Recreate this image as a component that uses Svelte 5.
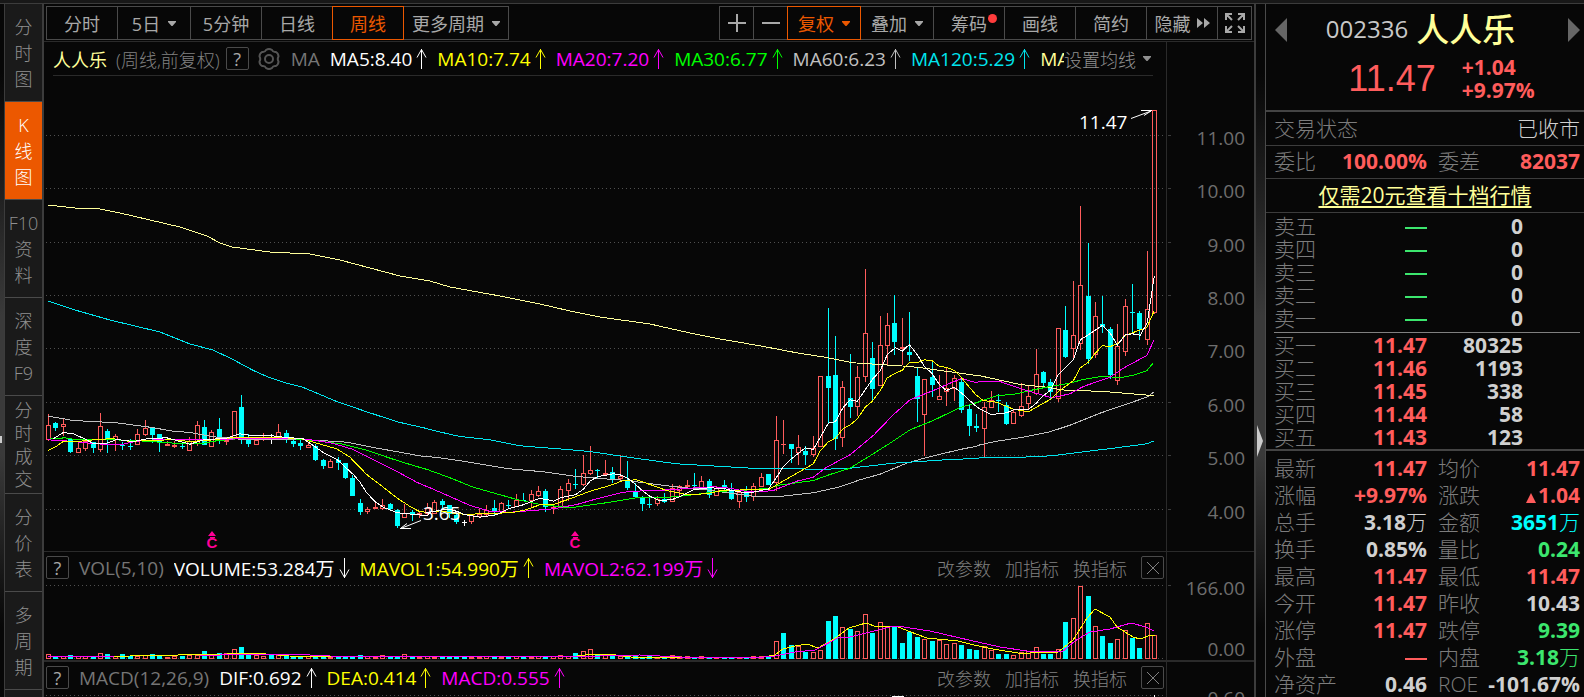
<script lang="ts">
  type Candle = { x: number; kind: string; top: number; bottom: number; high: number; low: number };

  const STEP = 7.425;
  const FIRST_X = 48;

  const sideTabs = [
    ["分", "时", "图"],
    ["K", "线", "图"],
    ["F10", "资", "料"],
    ["深", "度", "F9"],
    ["分", "时", "成", "交"],
    ["分", "价", "表"],
    ["多", "周", "期"],
  ];

  const periods = [
    { label: "分时" },
    { label: "5日", caret: true },
    { label: "5分钟" },
    { label: "日线" },
    { label: "周线", active: true },
    { label: "更多周期", caret: true, wide: true },
  ];

  const maLegend = [
    { text: "MA5:8.40", color: "#ffffff" },
    { text: "MA10:7.74", color: "#ffff00" },
    { text: "MA20:7.20", color: "#ff00ff" },
    { text: "MA30:6.77", color: "#00ff00" },
    { text: "MA60:6.23", color: "#c0c0c0" },
    { text: "MA120:5.29", color: "#00e5ee" },
    { text: "MA250:6.21", color: "#ffff99" },
  ];

  const volLegend = [
    { text: "VOLUME:53.284万", color: "#ffffff", down: true },
    { text: "MAVOL1:54.990万", color: "#ffff00" },
    { text: "MAVOL2:62.199万", color: "#ff00ff", down: true },
  ];

  const macdLegend = [
    { text: "DIF:0.692", color: "#ffffff" },
    { text: "DEA:0.414", color: "#ffff00" },
    { text: "MACD:0.555", color: "#ff00ff" },
  ];

  const gridY = [135, 188, 242, 295, 348, 402, 455, 509];
  const priceLabels = gridY.map((y, i) => ({ y: y - 76, text: (11 - i).toFixed(2) }));

  // blocks of candles: offset, then "kind top bottom high low" in thirds of a pixel
  const candleBlocks: [number, string][] = [
    [370, `r 165 209 132 213,c 159 174 156 183,r 162 171 144 198,c 207 246 207 249,r 234 248 216 248,r 212 236 209 243,
      c 216 234 216 249,r 168 240 129 246,c 183 209 177 249,r 198 210 192 243,c 225 228 215 240,c 228 231 208 240,
      r 192 224 177 224,r 174 195 150 198,c 174 195 171 219,c 192 216 192 246,r 222 227 213 227,r 225 230 213 235,
      c 228 231 217 237,r 213 242 201 242,r 165 222 153 227,c 171 225 150 225,r 186 230 180 230,c 177 210 144 222,
      r 210 215 205 225,r 123 207 123 207,c 111 210 75 222,c 207 222 192 231,r 210 224 210 224,r 202 210 189 213,
      w 207 210 192 222,r 186 200 162 204,c 189 204 180 219,c 213 222 207 231,c 219 228 210 240,r 225 234 220 234,
      c 228 270 222 273,c 270 288 266 297,r 273 293 267 293,c 270 279 261 300,c 279 324 279 327,c 324 378 315 378,
      c 399 426 387 435,r 417 426 410 432,r 411 417 399 417,r 405 417 387 420,c 402 417 399 423,c 420 468 417 474,
      r 429 443 402 443,c 426 432 420 453,r 429 434 423 444,r 414 432 399 435,r 396 431 390 432,c 393 405 387 417,
      c 405 432 405 444,c 435 456 432 462,w 456 459 450 468,r 436 456 432 462,r 432 440 417 444,r 420 435 405 440,
      c 414 423 390 438,r 399 425 396 432,c 405 408 390 414,r 390 412 372 412,c 389 392 369 393,r 372 392 360 412,
      r 363 378 348 381,c 363 411 357 426,r 411 417 405 432,r 357 411 348 414,r 339 362 327 393,c 342 345 297 357,
      r 309 345 255 348,r 300 312 228 315,c 299 302 297 327,r 309 314 270 314,c 306 330 291 340,r 318 327 255 333,
      c 330 354 273 360,c 363 381 339 384,c 381 402 378 423,c 402 405 378 414,r 387 402 378 408,c 387 395 369 400,
      r 354 395 342 395,r 348 362 345 378,r 345 350 330 350,c 344 347 309 359,r 333 353 318 358,c 333 374 327 384,
      r 353 377 348 378,c 345 351 330 366,c 360 387 339 390,r 366 396 360 414,c 363 381 348 396,r 348 380 339 393,
      r 321 350 309 352,c 312 345 312 345,r 210 339 138 363,r 222 225 150 252,c 222 237 222 279`],
    [240, `r 622 638 585 675,c 633 645 618 675,r 625 644 588 650,r 409 622 409 622,c 408 444 204 552,c 405 597 288 630,
      r 441 593 423 621,c 474 501 342 534,r 412 500 378 528,r 279 412 87 426,c 354 447 306 486,r 316 437 228 437,
      r 256 317 219 378,c 249 306 165 345,r 321 327 234 375,c 336 345 216 363,c 408 477 381 546,r 418 524 418 648,
      c 411 435 366 471,r 468 479 405 480,r 445 457 381 497,r 414 448 405 483,c 426 510 414 519,c 507 558 492 588,
      c 558 564 522 576,r 502 566 486 651,r 480 503 453 503,c 480 483 462 516,c 495 552 486 555,r 516 551 510 551`],
    [90, `r 948 977 880 980,r 919 941 888 956,r 853 911 777 915,c 846 879 843 888,c 876 906 867 927,r 714 926 714 936,
      c 720 801 648 804,r 735 776 573 806,r 586 761 348 780,c 618 807 459 822,r 679 794 636 804,c 702 711 618 729,
      c 717 855 711 867,r 769 872 702 885,r 649 785 627 798,c 666 669 582 726,c 669 717 663 750,r 657 749 483 765,
      r 61 668 61 671`],
  ];

  const candles: Candle[] = candleBlocks
    .flatMap(([base, rows]) =>
      rows.split(",").map((row) => {
        const [kind, ...n] = row.trim().split(" ");
        const [top, bottom, high, low] = n.map((v) => Math.round(base + Number(v) / 3));
        return { kind, top, bottom: Math.max(bottom, top + 1), high, low };
      })
    )
    .map((c, i) => ({ ...c, x: Math.round(FIRST_X + i * STEP) }));

  const colors: Record<string, string> = { r: "#ff5c5c", c: "#00ffff", w: "#ffffff" };

  function join(...tiles: [number, number, string][]) {
    return tiles
      .flatMap(([ox, oy, pts]) =>
        pts.split(" ").map((p) => {
          const [x, y] = p.split(",").map(Number);
          return `${(ox + x / 3).toFixed(1)},${(oy + y / 3 + 0.5).toFixed(1)}`;
        })
      )
      .join(" ");
  }

  const maLines = [
    {
      color: "#c0c0c0",
      points: join(
        [40, 370, "25,137 100,150 230,157 330,170 400,182 450,186 520,199 600,206 790,207 920,215 1000,231 1090,247 1150,258"],
        [430, 370, "0,259 30,262 100,272 230,294 340,304 440,318 500,323 590,330 720,347 830,358 930,372 985,379"],
        [760, 240, "0,769 60,768 160,757 240,739 300,718 360,701 440,668 500,651 600,627 650,617"],
        [980, 90, "0,1063 50,1052 130,1040 210,1024 270,1004 360,968 460,934 500,920 523,904"]
      ),
    },
    {
      color: "#00e5ee",
      points:
        "48,301 75,310 110,320 160,332 190,344 213,350 232,359 " +
        join(
          [40, 370, "640,0 690,22 740,38 785,49 890,93 980,124 1072,154 1160,174"],
          [430, 370, "10,180 90,198 180,208 270,226 400,236 480,243 600,261 740,280 980,294"],
          [760, 240, "0,685 130,685 160,688 270,683 400,668 570,657 650,654"],
          [980, 90, "0,1102 90,1102 215,1096 300,1085 400,1073 500,1060 523,1051"]
        ),
    },
    {
      color: "#ffff99",
      points:
        "48,205 75,208 100,209 120,213 150,220 180,227 207,236 220,243 232,247 270,252 310,254 340,260 400,276 430,281 450,287 500,296 540,304 570,311 600,317 650,324 690,333 720,339 " +
        join(
          [760, 240, "0,316 110,337 200,351 280,367 450,378 500,384 600,398 650,405"],
          [980, 90, "0,856 120,882 190,889 260,900 360,902 480,912 523,916"]
        ),
    },
    {
      color: "#00ff00",
      points: join(
        [40, 370, "25,206 75,202 100,206 200,207 320,212 370,216 440,220 490,218 530,211 600,204 760,205 840,212 910,221 980,239 1050,263 1120,285 1165,298"],
        [430, 370, "0,300 60,322 130,350 200,370 260,387 330,402 420,412 520,398 620,382 700,382 780,374 860,363 940,359 980,357"],
        [760, 240, "0,745 30,744 50,735 160,720 210,702 270,683 330,646 390,608 450,568 520,540 600,501 655,485"],
        [980, 90, "0,932 50,916 110,910 150,900 210,888 260,880 310,867 370,857 420,862 460,854 500,841 520,817"]
      ),
    },
    {
      color: "#ff00ff",
      points: join(
        [40, 370, "25,208 90,212 150,218 200,222 240,223 290,212 360,207 450,208 560,207 600,204 780,205 830,210 880,219 940,237 1000,268 1060,297 1130,335 1165,350"],
        [430, 370, "0,352 60,378 120,405 180,422 240,425 310,420 370,415 440,402 500,385 580,365 640,361 720,358 780,353 850,349 900,353 950,363"],
        [760, 240, "0,754 40,750 110,722 160,710 200,680 270,643 340,585 400,523 450,478 520,450 570,428 605,414 650,427"],
        [980, 90, "0,872 60,873 130,897 215,922 270,910 310,888 390,860 430,833 500,795 523,747"]
      ),
    },
    {
      color: "#ffff00",
      points: join(
        [40, 370, "25,240 45,230 70,213 120,212 180,206 220,205 270,213 310,210 400,208 450,213 520,208 590,200 680,200 780,204 820,215 890,235 930,260 980,312 1030,350 1070,382 1110,408 1140,424 1165,425"],
        [430, 370, "0,425 30,421 70,428 110,432 160,429 240,427 280,420 330,403 370,402 420,385 480,362 540,345 580,330 620,328 660,342 710,360 770,372 830,370 880,359 985,358"],
        [760, 240, "0,748 25,748 50,733 100,704 160,670 180,632 205,604 226,593 250,564 271,553 292,535 316,500 337,482 361,450 382,412 406,398 427,389 448,366 472,367 493,358 517,361 538,378 559,380 583,390 604,411 628,440 649,464"],
        [980, 90, "10,930 50,935 100,956 145,964 190,938 211,927 235,903 280,871 301,832 325,815 346,788 367,766 391,768 412,760 436,734 457,727 481,718 500,712 523,660"]
      ),
    },
    {
      color: "#ffffff",
      points: join(
        [40, 370, "40,205 70,186 100,190 130,203 160,219 200,218 230,207 280,213 320,205 380,202 420,213 450,221 490,208 560,203 600,190 640,196 690,195 720,199 790,205 820,225 850,246 890,266 916,290 940,312 960,335 980,367 1006,394 1030,410 1072,427 1117,431 1162,436"],
        [430, 370, "0,425 37,418 60,417 82,423 103,432 150,440 200,433 235,415 280,403 325,385 350,386 370,392 391,382 436,373 460,356 481,331 505,318 550,310 575,314 600,328 620,345 637,360 661,378 690,391 727,387 748,379 793,357 838,352 883,354 904,360 949,367 985,363"],
        [760, 240, "0,750 25,746 49,712 70,678 92,657 136,622 160,627 205,548 226,544 250,500 271,478 292,482 337,417 361,390 382,342 406,322 427,332 448,312 472,343 493,377 517,400 538,432 559,450 583,440 604,457 649,498"],
        [980, 90, "0,956 34,972 80,967 100,958 145,957 169,938 190,915 211,900 235,853 280,808 301,748 325,733 367,705 391,728 412,764 436,733 457,730 481,734 502,696 523,556"]
      ),
    },
  ];

  // bar heights in pixels above the zero line
  const volumes = [
    5, 2, 3, 4, 3, 3, 3, 6, 5, 3, 5, 3, 3, 4, 5, 3, 2, 3, 3, 4, 4, 8, 5, 6, 6, 10, 12, 6, 4, 3, 4, 4, 3, 3, 3, 3, 3, 2, 2, 2,
    2, 3, 4, 3, 2, 4, 3, 2, 5, 3, 2, 3, 2, 2, 2, 3, 2, 2, 2, 3, 3, 2, 3, 3, 2, 2, 3, 2, 3, 4, 3, 6, 8, 10, 5, 4, 4, 3, 3, 3,
    2, 3, 2, 3, 4, 3, 3, 2, 3, 2, 2, 2, 2, 2, 2, 3, 3, 3,
    18, 26, 14, 13, 7, 7, 9, 38, 43, 32, 30, 28, 45, 26, 37, 32, 32, 16, 27, 22, 20, 18, 19, 15, 16, 14, 10, 9, 13, 9, 5, 5,
    4, 7, 8, 12, 5, 5, 10, 37, 41, 73, 63, 33, 23, 16, 20, 29, 21, 11, 36, 24,
  ];
  const flipped = new Set([99, 115]);

  const volLines = [
    {
      color: "#ffff00",
      points:
        "48,657 130,656 227,654 242,653 266,654 289,656 351,657 577,656 593,654 616,655 631,657 764,657 775,655 783,649 795,646 807,644 818,648 834,639 849,628 866,623 877,627 896,626 908,631 927,638 958,641 974,645 993,649 1024,654 1037,652 1058,652 1073,640 1087,618 1095,609 1110,617 1117,627 1133,637 1140,639 1151,635 1155,636",
    },
    {
      color: "#ff00ff",
      points:
        "48,657 115,656 200,656 240,654 290,654 330,656 400,657 600,656 640,655 680,657 764,657 775,656 795,652 815,650 838,638 850,637 866,633 890,627 897,626 930,631 960,638 1000,647 1027,651 1055,651 1062,652 1075,641 1090,632 1110,629 1131,623 1146,627 1154,631",
    },
  ];

  const asks = ["五", "四", "三", "二", "一"];
  const bids = [
    ["买一", "11.47", "80325"],
    ["买二", "11.46", "1193"],
    ["买三", "11.45", "338"],
    ["买四", "11.44", "58"],
    ["买五", "11.43", "123"],
  ];

  const stats = [
    [["最新", "11.47", "up"], ["均价", "11.47", "up"]],
    [["涨幅", "+9.97%", "up"], ["涨跌", "1.04", "up tri"]],
    [["总手", "3.18", "flat", "万"], ["金额", "3651", "cyan", "万"]],
    [["换手", "0.85%", "flat"], ["量比", "0.24", "down"]],
    [["最高", "11.47", "up"], ["最低", "11.47", "up"]],
    [["今开", "11.47", "up"], ["昨收", "10.43", "flat"]],
    [["涨停", "11.47", "up"], ["跌停", "9.39", "down"]],
    [["外盘", "", "up dash"], ["内盘", "3.18", "down", "万"]],
    [["净资产", "0.46", "flat"], ["ROE", "-101.67%", "flat"]],
  ];

  let activeTab = $state(1);
</script>

{#snippet caret()}
  <svg class="caret" width="8" height="5" viewBox="0 0 8 5"><path d="M0 0H8V1L4.5 5H3.5L0 1Z" fill="currentColor" /></svg>
{/snippet}

{#snippet legend(items)}
  {#each items as item}
    <span class="legend-item" style="color: {item.color}">
      {item.text}
      <svg width="11" height="22" viewBox="0 0 11 22" fill="none" stroke="currentColor">
        {#if item.down}
          <path d="M5.5 1V21M1 12.5L5.5 20.5L10 12.5" />
        {:else}
          <path d="M5.5 21V1M1 9.5L5.5 1.5L10 9.5" />
        {/if}
      </svg>
    </span>
  {/each}
{/snippet}

{#snippet paneTools()}
  <div class="pane-tools">
    <button>改参数</button>
    <button>加指标</button>
    <button>换指标</button>
    <button class="box" aria-label="关闭">
      <svg width="14" height="14" viewBox="0 0 14 14" stroke="currentColor"><path d="M1 1L13 13M13 1L1 13" /></svg>
    </button>
  </div>
{/snippet}

<div class="app">
  <div class="gutter left">
    <i></i>
  </div>
  <nav class="side">
    {#each sideTabs as chars, i}
      <button class:active={i === activeTab} class:tight={chars.length > 3} onclick={() => (activeTab = i)}>
        {#each chars as ch}<span>{ch}</span>{/each}
      </button>
    {/each}
  </nav>

  <main>
    <div class="toolbar">
      <div class="group">
        {#each periods as p}
          <button class:active={p.active} class:wide={p.wide} class:has-caret={p.caret}>
            {p.label}{#if p.caret}{@render caret()}{/if}
          </button>
        {/each}
      </div>
      <div class="group">
        <button class="icon" aria-label="放大">
          <svg width="18" height="18" viewBox="0 0 18 18"><path d="M0 8H8V0H10V8H18V10H10V18H8V10H0Z" fill="currentColor" /></svg>
        </button>
        <button class="icon" aria-label="缩小">
          <svg width="18" height="18" viewBox="0 0 18 18"><path d="M0 8H18V10H0Z" fill="currentColor" /></svg>
        </button>
        <button class="active has-caret">复权{@render caret()}</button>
        <button class="has-caret">叠加{@render caret()}</button>
        <button class="chips">筹码<i class="dot"></i></button>
        <button>画线</button>
        <button>简约</button>
        <button class="has-caret hide">隐藏
          <svg width="13" height="10" viewBox="0 0 13 10"><path d="M0 0L6 5L0 10ZM7 0L13 5L7 10Z" fill="currentColor" /></svg>
        </button>
        <button class="icon" aria-label="全屏">
          <svg width="22" height="22" viewBox="0 0 22 22" fill="none" stroke="currentColor" stroke-width="2">
            <path d="M2 8V2H8M14 2H20V8M20 14V20H14M8 20H2V14M2 2L8 8M20 2L14 8M20 20L14 14M2 20L8 14" />
          </svg>
        </button>
      </div>
    </div>

    <section class="pane price">
      <div class="plot">
        <header>
          <span class="name">人人乐</span>
          <span class="mode">(周线,前复权)</span>
          <button class="box">?</button>
          <button class="gear" aria-label="设置">
            <svg width="24" height="24" viewBox="0 0 24 24" fill="none" stroke="#555" stroke-width="2">
              <path d="M9 3Q12 1 15 3Q16 5.500 19 5Q21.500 6.500 21.500 9.500Q20 12 21.500 14.500Q21.500 17.500 19 19Q16 18.500 15 21Q12 23 9 21Q8 18.500 5 19Q2.500 17.500 2.500 14.500Q4 12 2.500 9.500Q2.500 6.500 5 5Q8 5.500 9 3Z" />
              <circle cx="12" cy="12" r="4" />
            </svg>
          </button>
          <span class="ma">MA</span>
          <div class="legend">{@render legend(maLegend)}</div>
          <button class="ma-set">设置均线{@render caret()}</button>
        </header>
        <svg class="canvas" viewBox="44 76 1122 475" preserveAspectRatio="none">
          {#each gridY as y}
            <line x1="46" x2="1164" y1={y + 0.5} y2={y + 0.5} class="grid" />
          {/each}
          {#each candles as c}
            {@const color = colors[c.kind]}
            <g shape-rendering="crispEdges" fill={color}>
              {#if c.high < c.top}<rect x={c.x} y={c.high} width="1" height={c.top - c.high} />{/if}
              {#if c.low > c.bottom}<rect x={c.x} y={c.bottom} width="1" height={c.low - c.bottom} />{/if}
              {#if c.kind === "r" && c.bottom - c.top > 2}
                <path d="M{c.x - 2} {c.top}h5v{c.bottom - c.top}h-5ZM{c.x - 1} {c.top + 1}v{c.bottom - c.top - 2}h3v-{c.bottom - c.top - 2}Z" />
              {:else}
                <rect x={c.x - 2} y={c.top} width="5" height={c.bottom - c.top} />
              {/if}
            </g>
          {/each}
          {#each maLines as line}
            <polyline points={line.points} stroke={line.color} fill="none" shape-rendering="crispEdges" />
          {/each}
          <g stroke="#fff" fill="none">
            <path d="M1131 118.500L1151 111M1141 110.500H1152M1144 115.500L1151 111" />
            <path d="M421 520.500L402 528M411 528.500H400M407 523.500L401 528" />
          </g>
          <text x="1079" y="129" class="mark">11.47</text>
          <text x="423" y="520" class="mark">3.65</text>
          {#each [212, 575] as x}
            <g fill="#ff0096">
              <path d="M{x} 531L{x + 4} 536H{x - 4}ZM{x - 2} 537h5v1h-5Z" />
              <text {x} y="548" class="event">C</text>
            </g>
          {/each}
        </svg>
      </div>
      <div class="axis">
        {#each priceLabels as l}
          <i class="tick" style="top: {l.y + 34}px"></i>
          <span style="top: {l.y + 37}px">{l.text}</span>
        {/each}
      </div>
    </section>

    <section class="pane volume">
      <div class="plot">
        <header>
          <button class="box">?</button>
          <span class="ma">VOL(5,10)</span>
          <div class="legend">{@render legend(volLegend)}</div>
          {@render paneTools()}
        </header>
        <svg class="canvas" viewBox="44 585 1122 75" preserveAspectRatio="none">
          <line x1="46" x2="1164" y1="585.500" y2="585.500" class="grid" />
          <line x1="46" x2="1164" y1="658.500" y2="658.500" class="grid" />
          {#each volumes as v, i}
            {@const x = candles[i].x}
            {@const up = (candles[i].kind === "r") !== flipped.has(i)}
            <g shape-rendering="crispEdges">
              {#if up && v > 2}
                <path fill="#ff5c5c" d="M{x - 2} {659 - v}h5v{v}h-5ZM{x - 1} {660 - v}v{v - 2}h3v-{v - 2}Z" />
              {:else}
                <rect x={x - 2} y={659 - v} width="5" height={v} fill={up ? "#ff5c5c" : "#00ffff"} />
              {/if}
            </g>
          {/each}
          {#each volLines as line}
            <polyline points={line.points} stroke={line.color} fill="none" shape-rendering="crispEdges" />
          {/each}
        </svg>
      </div>
      <div class="axis">
        <i class="tick" style="top: 33px"></i>
        <span style="top: 36px">166.00</span>
        <span style="top: 97px">0.00</span>
      </div>
    </section>

    <section class="pane macd">
      <div class="plot">
        <header>
          <button class="box">?</button>
          <span class="ma">MACD(12,26,9)</span>
          <div class="legend">{@render legend(macdLegend)}</div>
          {@render paneTools()}
        </header>
        <svg class="canvas" viewBox="44 695 1122 60" preserveAspectRatio="none">
          <line x1="46" x2="1164" y1="695.500" y2="695.500" class="grid" />
          <rect x="892" y="696" width="12" height="1" fill="#fff" />
          <rect x="1154" y="695" width="1" height="60" fill="#fff" />
        </svg>
      </div>
      <div class="axis">
        <span style="top: 36px">0.60</span>
      </div>
    </section>
  </main>

  <div class="gutter right">
    <svg width="6" height="32" viewBox="0 0 6 32"><path d="M0 0L6 16L0 32Z" fill="#ccc" /></svg>
  </div>

  <aside>
    <div class="quote">
      <div class="title">
        <button aria-label="上一只"><svg width="12" height="24" viewBox="0 0 12 24"><path d="M12 0V24L0 12Z" fill="#666" /></svg></button>
        <h1><span>002336</span> 人人乐</h1>
        <button aria-label="下一只"><svg width="12" height="24" viewBox="0 0 12 24"><path d="M0 0V24L12 12Z" fill="#666" /></svg></button>
      </div>
      <div class="last">
        <strong>11.47</strong>
        <div>
          <span>+1.04</span>
          <span>+9.97%</span>
        </div>
      </div>
    </div>
    <div class="row status">
      <span class="label">交易状态</span>
      <span>已收市</span>
    </div>
    <table class="stats row">
      <tbody>
        <tr>
          <th>委比</th>
          <td class="up">100.00%</td>
          <th>委差</th>
          <td class="up">82037</td>
        </tr>
      </tbody>
    </table>
    <div class="row promo"><a href="#level2">仅需20元查看十档行情</a></div>
    <table class="book asks">
      <tbody>
        {#each asks as n}
          <tr><th>卖{n}</th><td class="down dash"></td><td>0</td><td></td></tr>
        {/each}
      </tbody>
    </table>
    <hr />
    <table class="book">
      <tbody>
        {#each bids as [label, price, size]}
          <tr><th>{label}</th><td class="up">{price}</td><td>{size}</td><td></td></tr>
        {/each}
      </tbody>
    </table>
    <table class="stats list">
      <tbody>
        {#each stats as pair}
          <tr>
            {#each pair as [label, value, tone, unit]}
              <th>{label}</th>
              <td class={tone}>{value}{#if unit}<small>{unit}</small>{/if}</td>
            {/each}
          </tr>
        {/each}
      </tbody>
    </table>
  </aside>
</div>

<style>
  :global(body) {
    background: #070707;
    overflow: hidden;
  }

  .app {
    display: flex;
    box-sizing: border-box;
    height: 100vh;
    overflow: hidden;
    border-top: 3px solid #181818;
    background: #070707;
    color: #a8a8a8;
    font-family: "Open Sans", "Noto Sans CJK SC", sans-serif;
    font-size: 18px;
    box-shadow: inset 0 1px #3c3c3c;
    padding-top: 1px;
  }

  button {
    margin: 0;
    padding: 0;
    border: 0;
    background: none;
    color: inherit;
    font: inherit;
    cursor: pointer;
  }

  svg {
    display: block;
    flex-shrink: 0;
  }

  .gutter {
    position: relative;
    flex-shrink: 0;
    background: linear-gradient(#070707 10%, #3a3a3a 45%, #3a3a3a 65%, #070707 90%);
  }

  .gutter.left {
    width: 4px;
  }

  .gutter.left i {
    position: absolute;
    top: 432px;
    left: 0;
    width: 2px;
    height: 7px;
    background: #ccc;
  }

  .gutter.right {
    width: 9px;
    border-right: 1px solid #4a4a4a;
  }

  .gutter.right svg {
    position: absolute;
    top: 421px;
    left: 1px;
  }

  .side {
    width: 37px;
    flex-shrink: 0;
    border-left: 1px solid #3c3c3c;
    border-right: 2px solid #3c3c3c;
    background: #1a1a1a;
  }

  .side button {
    display: flex;
    flex-direction: column;
    align-items: center;
    justify-content: center;
    box-sizing: border-box;
    width: 100%;
    height: 98px;
    border-bottom: 1px solid #4a4a4a;
    line-height: 26px;
    font-weight: 300;
    color: #909090;
  }

  .side .tight {
    line-height: 23px;
  }

  .side .active {
    background: #ec5800;
    color: #fff;
  }

  main {
    flex: 1;
    min-width: 0;
    border-right: 2px solid #3c3c3c;
  }

  .toolbar {
    display: flex;
    justify-content: space-between;
    height: 38px;
    padding: 2px 2px 0;
    box-sizing: border-box;
    border-bottom: 1px solid #2a2a2a;
  }

  .group {
    display: flex;
  }

  .group button {
    display: flex;
    align-items: center;
    justify-content: center;
    box-sizing: border-box;
    width: 72px;
    height: 34px;
    margin-right: -1px;
    border: 1px solid #4a4a4a;
    white-space: nowrap;
  }

  .group:last-child button:last-child {
    margin-right: 0;
  }

  .group .has-caret {
    gap: 8px;
    width: 74px;
  }

  .group .wide {
    width: 106px;
  }

  .group .icon {
    width: 35px;
  }

  .group .hide {
    width: 72px;
    gap: 6px;
  }

  .group .active {
    position: relative;
    border-color: #ec5800;
    color: #ec5800;
  }

  .chips {
    position: relative;
  }

  .dot {
    position: absolute;
    top: 7px;
    right: 7px;
    width: 9px;
    height: 9px;
    border-radius: 50%;
    background: #ff3c3c;
  }

  .pane {
    display: flex;
    border-bottom: 1px solid #2a2a2a;
  }

  .volume {
    border-bottom: 2px solid #2a2a2a;
  }

  .plot {
    flex: 1;
    min-width: 0;
    border-right: 1px solid #2a2a2a;
  }

  .canvas {
    width: 100%;
  }

  .price .canvas {
    height: 475px;
  }

  .volume .canvas {
    height: 75px;
  }

  .macd .canvas {
    height: 60px;
  }

  .grid {
    stroke: #505050;
    stroke-dasharray: 1 3;
    shape-rendering: crispEdges;
  }

  .mark {
    fill: #fff;
    font-size: 19px;
  }

  .event {
    font: bold 15px "Liberation Sans", sans-serif;
    text-anchor: middle;
  }

  header {
    display: flex;
    align-items: center;
    height: 33px;
    box-sizing: border-box;
    white-space: nowrap;
  }

  .price header {
    height: 34px;
    margin: 0 13px 0 9px;
    border-bottom: 1px solid #2a2a2a;
  }

  .volume header,
  .macd header {
    padding: 0 2px 2px;
  }

  .name {
    color: #ffff99;
  }

  .mode {
    margin-left: 9px;
    font-weight: 300;
    color: #808080;
  }

  .box {
    display: flex;
    align-items: center;
    justify-content: center;
    box-sizing: border-box;
    width: 23px;
    height: 23px;
    border: 1px solid #4a4a4a;
    border-radius: 2px;
    line-height: 20px;
  }

  .price .box {
    margin-left: 6px;
  }

  .gear {
    margin-left: 8px;
  }

  .ma {
    margin-left: 10px;
    font-size: 19px;
    color: #757575;
  }

  .legend {
    display: flex;
    flex: 1;
    min-width: 0;
    overflow: hidden;
    margin-left: 10px;
    font-size: 19px;
  }

  .legend-item {
    display: flex;
    align-items: center;
    gap: 4px;
    margin-right: 10px;
  }

  .ma-set {
    display: flex;
    align-items: center;
    gap: 7px;
    margin-right: 2px;
    font-weight: 300;
    color: #909090;
  }

  .pane-tools {
    display: flex;
    align-items: center;
    gap: 14px;
    font-weight: 300;
    color: #808080;
  }

  .axis {
    position: relative;
    width: 87px;
    font-size: 19px;
    color: #6e6e6e;
  }

  .axis span {
    position: absolute;
    right: 9px;
    line-height: 26px;
    transform: translateY(-50%);
  }

  .tick {
    position: absolute;
    left: 1px;
    width: 3px;
    height: 1px;
    background: #3c3c3c;
  }

  aside {
    width: 318px;
    flex-shrink: 0;
    font-size: 21px;
    color: #d0d0d0;
  }

  .quote {
    height: 106px;
    border-bottom: 2px solid #444;
  }

  .title {
    display: flex;
    align-items: center;
    justify-content: space-between;
    height: 52px;
    padding: 0 4px 0 9px;
  }

  h1 {
    display: flex;
    align-items: center;
    gap: 8px;
    margin: 0 14px 4px 0;
    font-size: 33px;
    font-weight: 500;
    color: #ffff99;
  }

  h1 span {
    font-size: 24px;
    font-weight: 400;
    color: #c8c8c8;
  }

  .last {
    display: flex;
    align-items: center;
    justify-content: center;
    gap: 26px;
    padding-left: 33px;
    color: #ff5c5c;
  }

  .last strong {
    font: 36px "Liberation Sans", sans-serif;
  }

  .last div {
    display: flex;
    flex-direction: column;
    line-height: 23px;
    font-weight: 700;
  }

  .row {
    box-sizing: border-box;
    height: 33px;
    border-bottom: 1px solid #3c3c3c;
  }

  .status {
    display: flex;
    align-items: center;
    justify-content: space-between;
    height: 34px;
    padding: 0 4px 3px 8px;
    font-weight: 300;
  }

  .label,
  th {
    color: #7c7c7c;
    font-weight: 300;
    text-align: left;
  }

  .promo {
    height: 34px;
    line-height: 32px;
    text-align: center;
  }

  .promo a {
    color: #ffff99;
    text-underline-offset: 3px;
  }

  table {
    width: 100%;
    table-layout: fixed;
    border-collapse: collapse;
    white-space: nowrap;
  }

  th,
  td {
    box-sizing: border-box;
    padding: 0;
  }

  td {
    text-align: right;
    font-weight: 700;
  }

  th:first-child {
    padding-left: 8px;
  }

  .stats {
    line-height: 27px;
  }

  .stats.row {
    display: block;
    line-height: 30px;
  }

  .stats tbody {
    display: block;
  }

  .stats tr {
    display: flex;
    padding: 0 4px 0 8px;
  }

  .stats th,
  .stats th:first-child {
    width: 63px;
    padding: 0;
  }

  .stats td {
    width: 90px;
  }

  .stats td + th {
    width: 53px;
    padding-left: 11px;
  }

  .stats td:last-child {
    flex: 1;
  }

  .book {
    line-height: 23px;
  }

  .book tr {
    height: 23px;
  }

  .book td:nth-child(2) {
    width: 77px;
  }

  .book td:nth-child(3) {
    width: 96px;
  }

  .book td:last-child {
    width: 61px;
  }

  .asks {
    margin-top: 2px;
  }

  hr {
    margin: 2px 4px 1px 8px;
    border: 0;
    border-top: 1px solid #808080;
  }

  .list {
    display: block;
    border-top: 2px solid #444;
    padding-top: 4px;
  }

  small {
    font-size: 21px;
    font-weight: 300;
  }

  .up {
    color: #ff5c5c;
  }

  .down {
    color: #3ce66e;
  }

  .cyan {
    color: #00ffff;
  }

  .dash::after {
    content: "";
    display: inline-block;
    width: 22px;
    height: 2px;
    background: currentColor;
    vertical-align: middle;
  }

  .tri::before {
    content: "";
    display: inline-block;
    margin-right: 2px;
    border: 5px solid transparent;
    border-top: 0;
    border-bottom: 10px solid currentColor;
  }
</style>
